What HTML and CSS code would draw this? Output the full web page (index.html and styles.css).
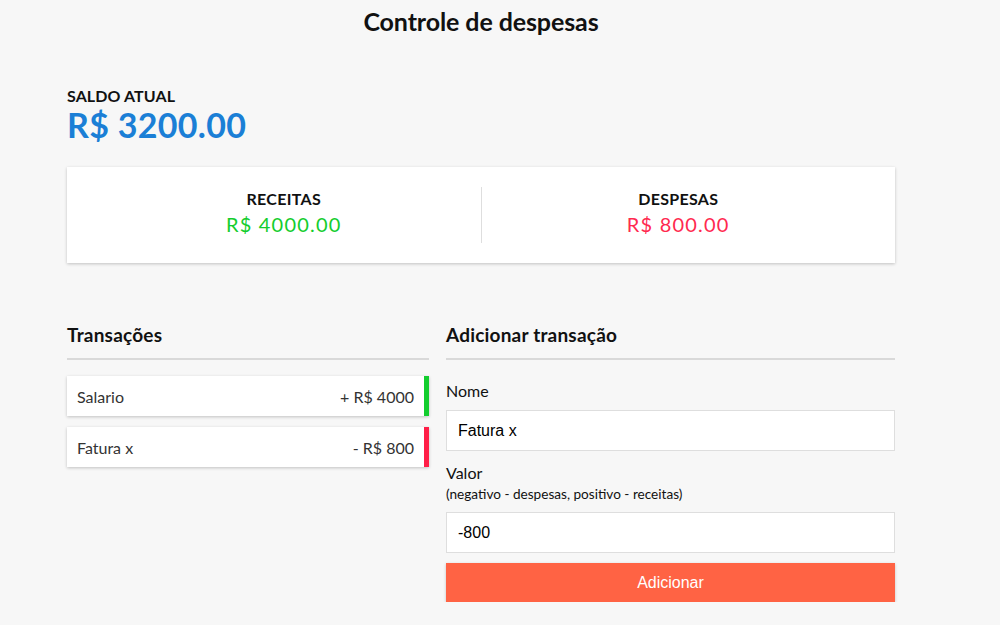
FILE: index.html
```html
<!DOCTYPE html>
<html lang="pt-BR">
<head>
<meta charset="utf-8">
<title>Controle de despesas</title>
<link rel="stylesheet" href="styles.css">
</head>
<body>
<div class="page">
  <h2 class="title">Controle de despesas</h2>
  <div class="container">
    <h4 class="balance-label">SALDO ATUAL</h4>
    <h1 class="balance">R$ 3200.00</h1>

    <div class="inc-exp">
      <div class="inc-exp-col">
        <h4>RECEITAS</h4>
        <p class="money plus">R$ 4000.00</p>
      </div>
      <div class="inc-exp-col">
        <h4>DESPESAS</h4>
        <p class="money minus">R$ 800.00</p>
      </div>
    </div>

    <div class="columns">
      <div class="col">
        <h3 class="section-title">Transações</h3>
        <ul class="list">
          <li class="item plus">Salario <span>+ R$ 4000</span></li>
          <li class="item minus">Fatura x <span>- R$ 800</span></li>
        </ul>
      </div>
      <div class="col">
        <h3 class="section-title">Adicionar transação</h3>
        <form class="form">
          <div class="form-control">
            <label for="text">Nome</label>
            <input type="text" id="text" value="Fatura x">
          </div>
          <div class="form-control">
            <label for="amount">Valor <br><small>(negativo - despesas, positivo - receitas)</small></label>
            <input type="text" id="amount" value="-800">
          </div>
          <button type="button" class="btn">Adicionar</button>
        </form>
      </div>
    </div>
  </div>
</div>
</body>
</html>
```

FILE: styles.css
```css
* { box-sizing: border-box; }

body {
  margin: 0;
  background: #f7f7f7;
  font-family: Lato, "Noto Sans", sans-serif;
  color: #111;
}

.page {
  width: 962px;
}

.title {
  margin: 0;
  padding-top: 6px;
  text-align: center;
  font-size: 25px;
  font-weight: 700;
  letter-spacing: -0.1px;
  line-height: 30px;
}

.container {
  width: 828px;
  margin: 0 auto;
  padding-top: 50px;
}

.balance-label {
  margin: 0;
  font-size: 16px;
  font-weight: 700;
  line-height: 20px;
  letter-spacing: 0.1px;
}

.balance {
  margin: 0;
  font-size: 34px;
  font-weight: 700;
  line-height: 38px;
  color: #1b7fd6;
  letter-spacing: 0.3px;
}

.inc-exp {
  margin-top: 23px;
  background: #fff;
  box-shadow: 0 1px 3px rgba(0, 0, 0, 0.22);
  display: flex;
  padding: 20px;
  height: 96px;
}

.inc-exp-col {
  flex: 1;
  text-align: center;
}

.inc-exp-col:first-child {
  border-right: 1px solid #dedede;
}

.inc-exp-col h4 {
  margin: 2px 0 0;
  font-size: 16px;
  font-weight: 700;
  line-height: 20px;
  letter-spacing: 0.3px;
}

.money {
  margin: 2px 0 0;
  font-size: 20px;
  line-height: 26px;
  letter-spacing: 1.2px;
}

.money.plus { color: #13cd2e; }
.money.minus { color: #ff2a4f; }

.columns {
  display: flex;
  gap: 17px;
  margin-top: 61px;
}

.col:first-child { width: 362px; }
.col:last-child { flex: 1; }

.section-title {
  margin: 0;
  font-size: 19px;
  font-weight: 700;
  line-height: 22px;
  padding-bottom: 12px;
  border-bottom: 2px solid #d9d9d9;
  letter-spacing: 0.2px;
}

.list {
  list-style: none;
  margin: 16px 0 0;
  padding: 0;
}

.item {
  background: #fff;
  box-shadow: 0 1px 3px rgba(0, 0, 0, 0.22);
  display: flex;
  justify-content: space-between;
  align-items: center;
  height: 40px;
  padding: 0 10px;
  margin-bottom: 11px;
  font-size: 16px;
  color: #333;
}

.item.plus { border-right: 5px solid #13cd2e; }
.item.minus { border-right: 5px solid #ff1e47; }

.form { margin-top: 21px; }

.form-control { margin-bottom: 12px; }
.form-control:last-of-type { margin-bottom: 10px; }

.form-control label {
  display: block;
  font-size: 16px;
  line-height: 20px;
  margin-bottom: 9px;
}

.form-control small {
  display: inline-block;
  font-size: 13.6px;
  line-height: 18px;
  margin-top: 2px;
}

.form-control input {
  display: block;
  width: 100%;
  height: 41px;
  border: 1px solid #dedede;
  background: #fff;
  padding: 0 11px;
  font-family: "Liberation Sans", Arial, sans-serif;
  font-size: 16px;
  color: #000;
  border-radius: 0;
  outline: none;
}

.btn {
  display: block;
  width: 100%;
  height: 39px;
  border: 0;
  background: #ff6344;
  color: #fff;
  font-family: "Liberation Sans", Arial, sans-serif;
  font-size: 16px;
  box-shadow: 0 1px 3px rgba(0, 0, 0, 0.2);
  cursor: pointer;
}
```
